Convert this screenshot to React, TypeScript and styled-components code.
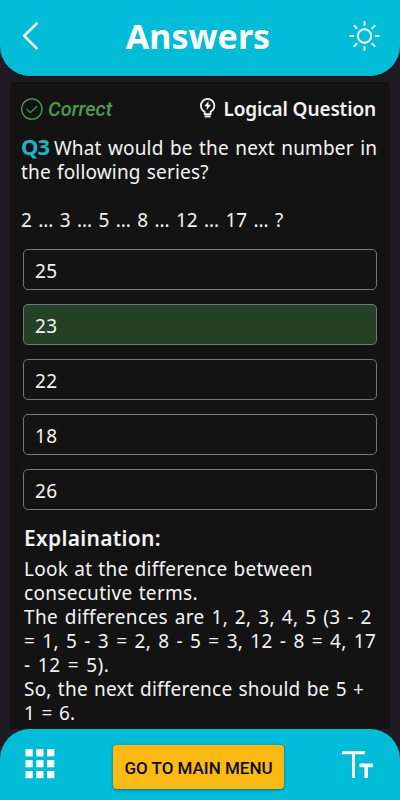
import React from 'react';
import styled, { createGlobalStyle } from 'styled-components';

const GlobalStyle = createGlobalStyle`
  * { box-sizing: border-box; }
  body { margin: 0; background: #1e1a24; }
`;

const Screen = styled.div`
  width: 400px;
  height: 800px;
  display: flex;
  flex-direction: column;
  overflow: hidden;
  background: #1e1a24;
  color: #f4f4f4;
  font-family: 'Noto Sans', sans-serif;
`;

const Header = styled.header`
  height: 76px;
  flex: none;
  display: grid;
  grid-template-columns: 60px 1fr 60px;
  align-items: center;
  padding: 0 5px 4px;
  background: #00bcd6;
  border-radius: 0 0 30px 30px;
  box-shadow: 0 1px 1px rgba(0, 0, 0, 0.5);
`;

const IconButton = styled.button<{ $align?: string }>`
  display: flex;
  justify-content: ${(p) => p.$align ?? 'center'};
  padding: 0;
  border: 0;
  background: none;
  color: #f0ffff;
`;

const BackButton = styled(IconButton)`
  padding-left: 17px;
`;

const Title = styled.h1`
  margin: 0;
  padding: 0 4px 0 0;
  text-align: center;
  font-size: 34px;
  line-height: 44px;
  font-weight: 700;
  color: #fff;
`;

const Card = styled.main`
  flex: 1;
  min-height: 0;
  margin: 6px 10px 0;
  padding: 13px 11px 0;
  background: #131313;
  border-radius: 4px 4px 0 0;
`;

const StatusRow = styled.div`
  height: 28px;
  display: flex;
  align-items: center;
  justify-content: space-between;
  padding-right: 3px;
`;

const Correct = styled.span`
  display: flex;
  align-items: center;
  gap: 5px;
  color: #4c9b50;
  font: italic 500 20px/28px Roboto, sans-serif;
`;

const Category = styled.span`
  display: flex;
  align-items: center;
  gap: 7px;
  font-size: 19px;
  line-height: 28px;
  font-weight: 600;
  letter-spacing: -0.14px;
`;

const StatusLabel = styled.span`
  padding-top: 1px;
  line-height: 27px;
`;

const Question = styled.div`
  margin-top: 13px;
`;

const Line = styled.div<{ $letter: number; $word: number }>`
  height: 24px;
  font-size: 19px;
  line-height: 24px;
  white-space: nowrap;
  letter-spacing: ${(p) => p.$letter}px;
  word-spacing: ${(p) => p.$word}px;
`;

const FirstLine = styled(Line)`
  display: flex;
  align-items: baseline;
`;

const Number = styled.b`
  flex: none;
  width: 33px;
  font-size: 22px;
  line-height: 20px;
  letter-spacing: -1px;
  color: #22b2c6;
`;

const Series = styled.div`
  margin-top: 24px;
`;

const Options = styled.div`
  display: grid;
  gap: 14px;
  margin: 17px 2px 0;
`;

const Option = styled.div<{ $correct: boolean }>`
  height: 41px;
  padding: 2px 11px 0;
  border: 1px solid #77777b;
  border-radius: 5px;
  background: ${(p) => (p.$correct ? '#244125' : '#131313')};
  font-size: 19px;
  line-height: 38px;
  letter-spacing: 0.3px;
`;

const Explanation = styled.section`
  padding: 14px 3px 0;
`;

const Subtitle = styled.h2`
  margin: 0 0 5px;
  font-size: 21px;
  line-height: 28px;
  font-weight: 600;
  letter-spacing: 0.28px;
`;

const Footer = styled.footer`
  height: 71px;
  flex: none;
  display: grid;
  grid-template-columns: 88px 172px 1fr;
  align-items: start;
  padding: 0 26px 0 25px;
  background: #00bcd6;
  border-radius: 30px 30px 0 0;
`;

const GridButton = styled(IconButton)`
  margin-top: 20px;
`;

const TextSizeButton = styled(IconButton)`
  margin-top: 21px;
`;

const MenuButton = styled.button`
  height: 44px;
  width: 171px;
  margin-top: 16px;
  padding: 2px 0 0;
  border: 0;
  border-radius: 4px;
  background: #fcb813;
  color: #0c0c0c;
  box-shadow: 0 1px 3px rgba(0, 0, 0, 0.4);
  font: 500 17px Roboto, sans-serif;
  white-space: nowrap;
`;

const options = ['25', '23', '22', '18', '26'];
const correctOption = '23';

const explanation = [
  { text: 'Look at the difference between', letter: 0.28, word: 0.8 },
  { text: 'consecutive terms.', letter: 0.3, word: 1 },
  { text: 'The differences are 1, 2, 3, 4, 5 (3 - 2', letter: 0.35, word: 1.5 },
  { text: '= 1, 5 - 3 = 2, 8 - 5 = 3, 12 - 8 = 4, 17', letter: 0.3, word: 1.9 },
  { text: '- 12 = 5).', letter: 0.4, word: 2 },
  { text: 'So, the next difference should be 5 +', letter: 0.22, word: 1 },
  { text: '1 = 6.', letter: 0, word: 1.7 },
];

const BackIcon = () => (
  <svg width="17" height="30" viewBox="0 0 17 30" fill="none" stroke="currentColor" strokeWidth="2.6" strokeLinecap="round" strokeLinejoin="round">
    <path d="M14.7 2.5 2.2 14.8 14.7 27.3" />
  </svg>
);

const SunIcon = () => (
  <svg width="32" height="32" viewBox="0 0 32 32" fill="none" stroke="currentColor" strokeWidth="2" strokeLinecap="round">
    <circle cx="15.5" cy="16" r="6.7" />
    <path d="M15.5 2v3M15.5 27v3M1.3 16h3M26.7 16h3M5.4 5.9l2.3 2.3M23.3 23.8l2.3 2.3M5.4 26.1l2.3-2.3M23.3 8.2l2.3-2.3" />
  </svg>
);

const CheckIcon = () => (
  <svg width="22" height="22" viewBox="0 0 22 22" fill="none" stroke="currentColor" strokeWidth="1.3" strokeLinecap="round" strokeLinejoin="round">
    <circle cx="10.8" cy="11" r="10.2" />
    <path d="m6 11.4 3.4 3.2 6.4-6.1" />
  </svg>
);

const BulbIcon = () => (
  <svg width="17" height="24" viewBox="0 0 17 24" fill="none" stroke="currentColor" strokeWidth="1.8" strokeLinejoin="round">
    <path d="M5.6 14.8C3.1 13.4 1.9 11.2 1.9 8.6a6.7 6.7 0 0 1 13.4 0c0 2.6-1.2 4.8-3.7 6.2v2.4h-6z" />
    <path d="M5.6 19.4h6" strokeWidth="2" />
    <path d="M9.6 4 5.3 9.3h2.6l-.4 4 4.5-5.5H9.3z" fill="currentColor" stroke="none" />
  </svg>
);

const GridIcon = () => (
  <svg width="30" height="30" viewBox="0 0 30 30" fill="#fff">
    {[0, 1, 2].map((row) =>
      [0, 1, 2].map((col) => (
        <rect key={`${row}${col}`} x={0.5 + col * 10.8} y={row * 10.9 + 0.2} width="7.2" height="7.2" />
      )),
    )}
  </svg>
);

const TextSizeIcon = () => (
  <svg width="32" height="30" viewBox="0 0 32 30" fill="none" stroke="#fff">
    <path d="M0 2.7h23M11.5 2.7v25.3" strokeWidth="2.9" />
    <path d="M17.5 15.4h13.4M24.2 15.4V28" strokeWidth="3.6" />
  </svg>
);

export default function App() {
  return (
    <>
      <GlobalStyle />
      <Screen>
        <Header>
          <BackButton aria-label="Back" $align="flex-start">
            <BackIcon />
          </BackButton>
          <Title>Answers</Title>
          <IconButton aria-label="Toggle theme">
            <SunIcon />
          </IconButton>
        </Header>
        <Card>
          <StatusRow>
            <Correct><CheckIcon /><StatusLabel>Correct</StatusLabel></Correct>
            <Category><BulbIcon /><StatusLabel>Logical Question</StatusLabel></Category>
          </StatusRow>
          <Question>
            <FirstLine $letter={0.16} $word={1.3}>
              <Number>Q3</Number>
              <span>What would be the next number in</span>
            </FirstLine>
            <Line $letter={0.17} $word={1}>the following series?</Line>
            <Series>
              <Line $letter={-0.08} $word={1.6}>2 ... 3 ... 5 ... 8 ... 12 ... 17 ... ?</Line>
            </Series>
          </Question>
          <Options>
            {options.map((value) => (
              <Option key={value} $correct={value === correctOption}>{value}</Option>
            ))}
          </Options>
          <Explanation>
            <Subtitle>Explaination:</Subtitle>
            {explanation.map((line) => (
              <Line key={line.text} $letter={line.letter} $word={line.word}>{line.text}</Line>
            ))}
          </Explanation>
        </Card>
        <Footer>
          <GridButton aria-label="All questions" $align="flex-start"><GridIcon /></GridButton>
          <MenuButton>GO TO MAIN MENU</MenuButton>
          <TextSizeButton aria-label="Text size" $align="flex-end"><TextSizeIcon /></TextSizeButton>
        </Footer>
      </Screen>
    </>
  );
}
